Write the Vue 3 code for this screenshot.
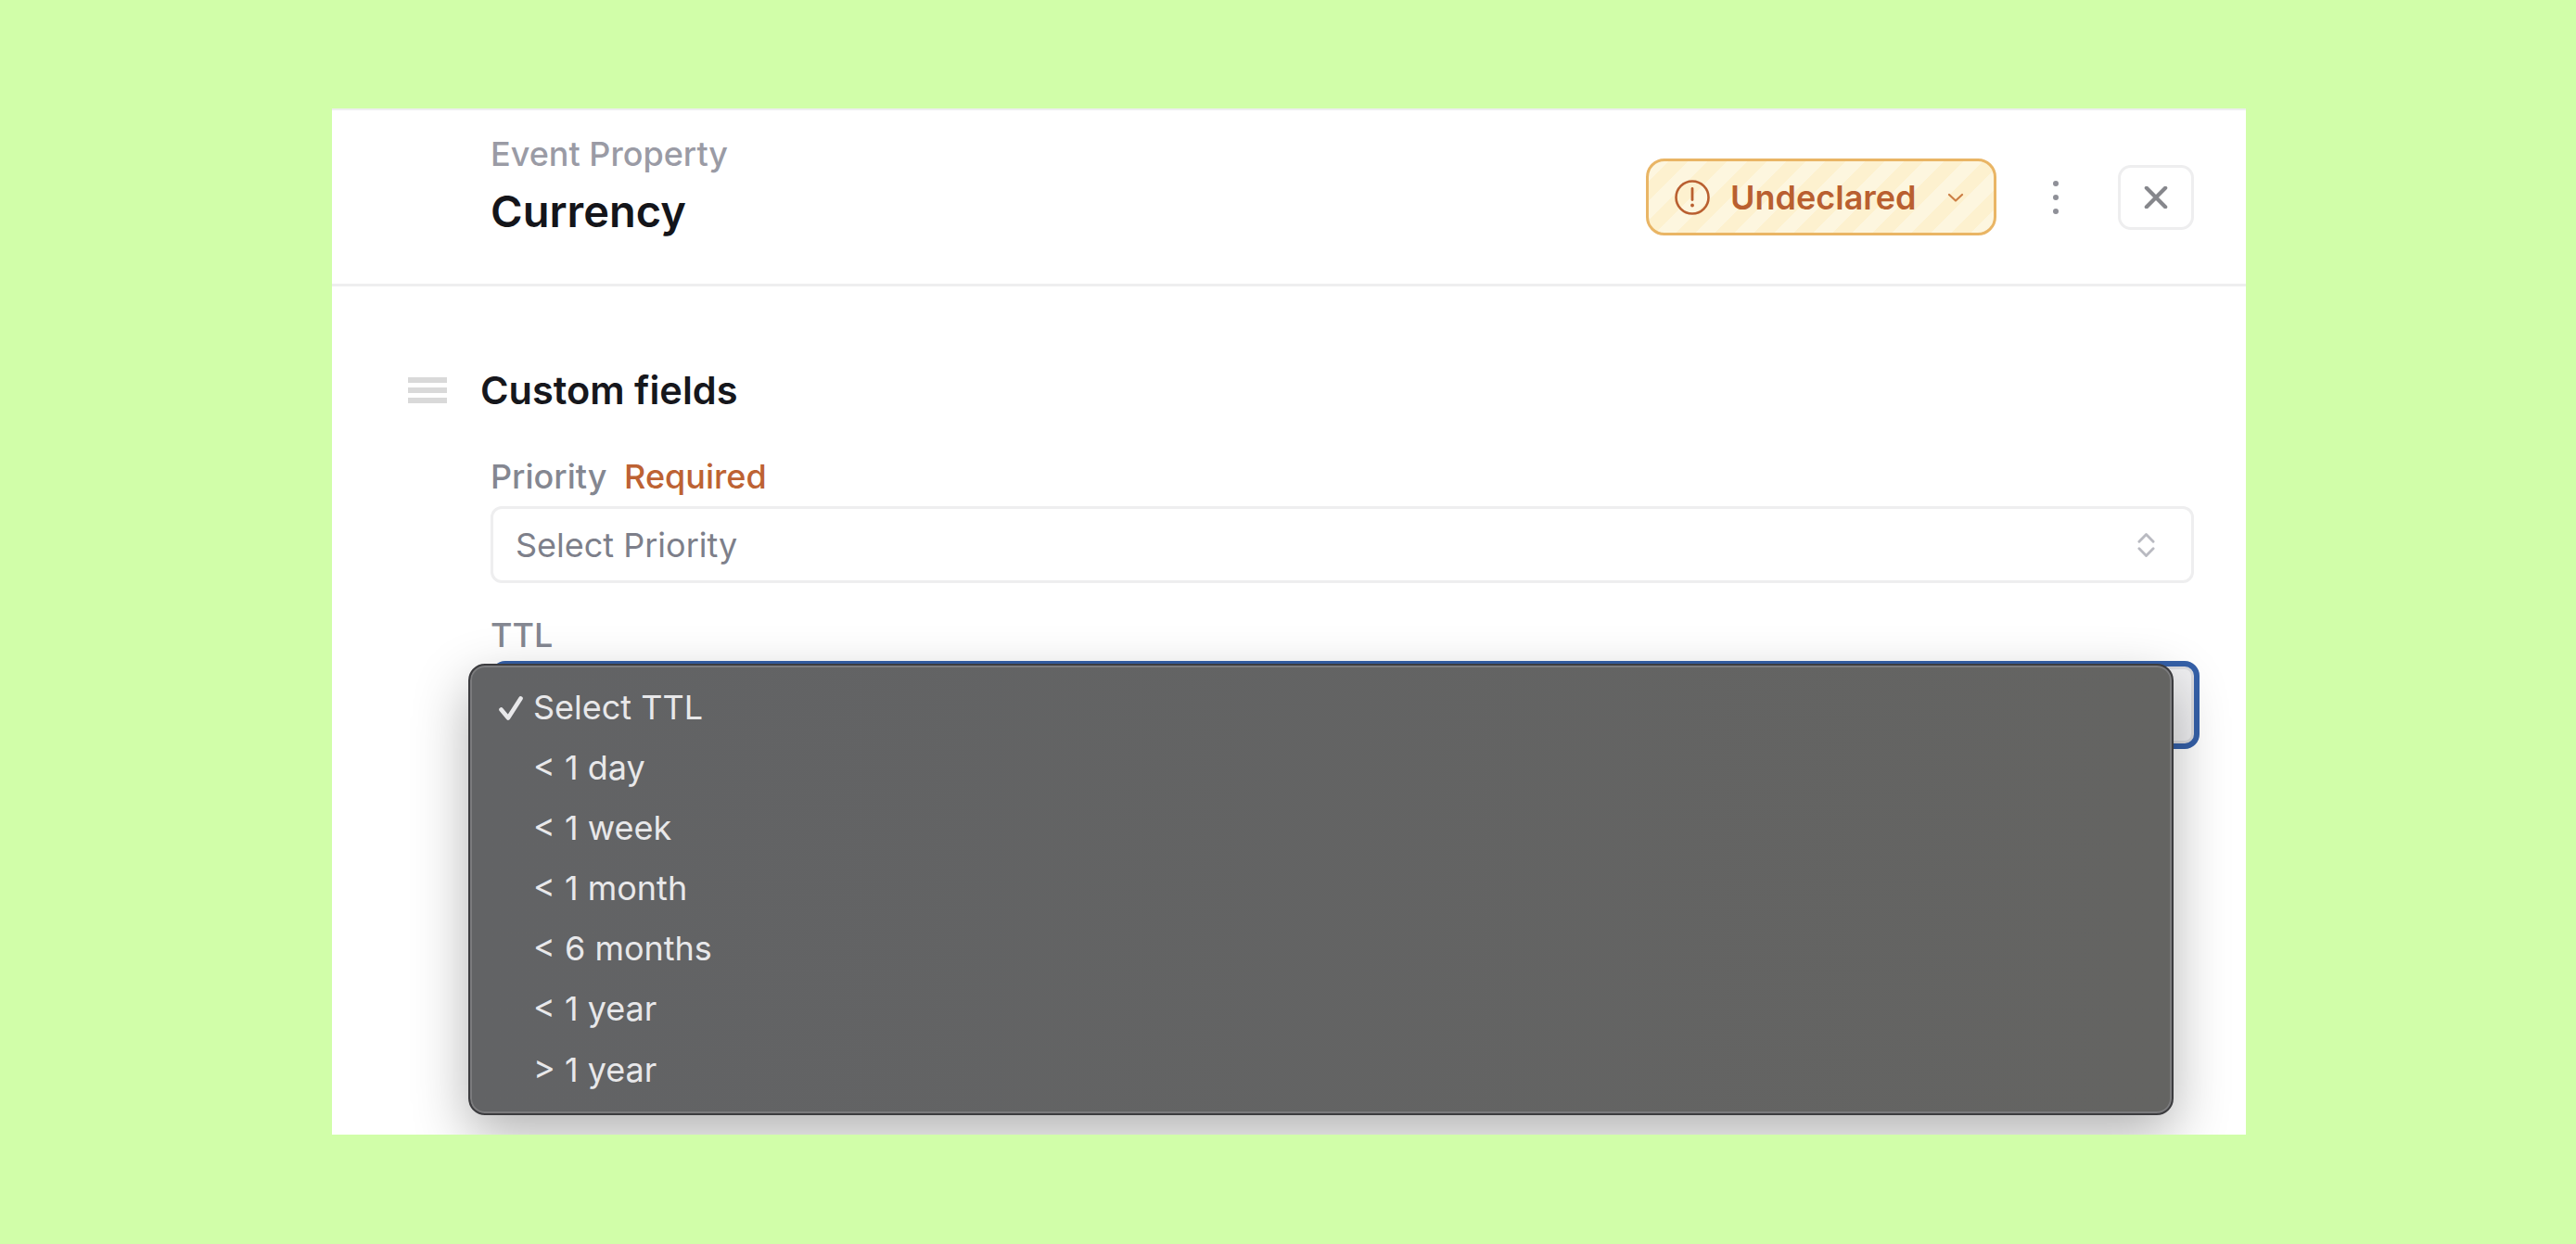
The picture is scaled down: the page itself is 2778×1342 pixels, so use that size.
<script setup>
const options = ['< 1 day', '< 1 week', '< 1 month', '< 6 months', '< 1 year', '> 1 year']
</script>

<template>
  <div class="page">
    <section class="panel">
      <header class="header">
        <div class="titles">
          <div class="eyebrow">Event Property</div>
          <h1 class="title">Currency</h1>
        </div>
        <div class="actions">
          <div class="badge">
            <svg class="badge-icon" viewBox="0 0 38 38" fill="none" stroke="currentColor">
              <circle cx="19" cy="19" r="17.5" stroke-width="2.6" />
              <path d="M19 9.5v12" stroke-width="2.8" stroke-linecap="round" />
              <circle cx="19" cy="27.5" r="1.9" fill="currentColor" stroke="none" />
            </svg>
            <span class="badge-text">Undeclared</span>
            <svg class="badge-chevron" viewBox="0 0 18 10" fill="none" stroke="currentColor">
              <path d="M2 2l7 6.5L16 2" stroke-width="2.2" stroke-linecap="round" stroke-linejoin="round" />
            </svg>
          </div>
          <div class="kebab"><i></i><i></i><i></i></div>
          <button class="close" aria-label="Close">
            <svg viewBox="0 0 26 26" fill="none" stroke="currentColor">
              <path d="M2 2l22 22M24 2L2 24" stroke-width="4.6" stroke-linecap="round" />
            </svg>
          </button>
        </div>
      </header>

      <div class="body">
        <div class="section-head">
          <div class="burger"><i></i><i></i><i></i></div>
          <h2 class="section-title">Custom fields</h2>
        </div>

        <div class="field first">
          <div class="label">Priority <span class="required">Required</span></div>
          <div class="select">
            <span>Select Priority</span>
            <svg class="updown" viewBox="0 0 20 28" fill="none" stroke="currentColor">
              <path d="M2 10l8-8 8 8M2 18l8 8 8-8" stroke-width="3" stroke-linecap="round" stroke-linejoin="round" />
            </svg>
          </div>
        </div>

        <div class="field">
          <div class="label">TTL</div>
          <div class="select focused"></div>
        </div>
      </div>

      <div class="menu">
        <div class="option selected">
          <svg class="check" viewBox="0 0 26 26" fill="none" stroke="currentColor">
            <path d="M2.5 14.5l7.5 9L23.5 2.5" stroke-width="4.6" stroke-linejoin="round" stroke-linecap="round" />
          </svg>
          Select TTL
        </div>
        <div v-for="o in options" :key="o" class="option">{{ o }}</div>
      </div>
    </section>
  </div>
</template>

<style>
html, body { margin: 0; background: #d1fea9; }
</style>

<style scoped>
.page {
  box-sizing: border-box;
  height: 1342px;
  padding: 117px 0 0 358px;
  background: #d1fea9;
  font-family: Inter, "Liberation Sans", sans-serif;
  overflow: hidden;
}
.panel {
  position: relative;
  box-sizing: border-box;
  width: 2064px;
  height: 1107px;
  background: #fff;
  border-top: 2px solid #eeeeef;
  overflow: hidden;
}
.header {
  box-sizing: border-box;
  height: 190px;
  display: flex;
  justify-content: space-between;
  padding: 0 56px 0 171px;
  border-bottom: 3px solid #eeeeef;
}
.titles { padding-top: 25px; }
.eyebrow {
  font-size: 36px;
  line-height: 44px;
  font-weight: 500;
  color: #9a9ba5;
}
.title {
  margin: 12px 0 0;
  font-size: 47px;
  line-height: 56px;
  font-weight: 600;
  color: #14151a;
}
.actions {
  display: flex;
  align-items: center;
}
.badge {
  box-sizing: border-box;
  width: 378px;
  height: 83px;
  display: flex;
  align-items: center;
  padding-left: 28px;
  border: 3px solid #e9b565;
  border-radius: 20px;
  color: #b95f30;
  background: repeating-linear-gradient(135deg, #fdf6df 0 15px, #fdf1cf 15px 30px);
}
.badge-icon { width: 38px; height: 38px; flex: none; }
.badge-text {
  margin-left: 22px;
  font-size: 36px;
  line-height: 44px;
  font-weight: 600;
}
.badge-chevron { width: 18px; height: 10px; margin-left: 33px; flex: none; color: #cc7f45; }
.kebab {
  width: 8px;
  margin-left: 61px;
  display: flex;
  flex-direction: column;
  gap: 9px;
}
.kebab i {
  display: block;
  width: 6px;
  height: 6px;
  border-radius: 50%;
  background: #8f9098;
}
.close {
  box-sizing: border-box;
  width: 82px;
  height: 70px;
  margin-left: 62px;
  padding: 0;
  display: flex;
  align-items: center;
  justify-content: center;
  background: #fff;
  border: 3px solid #eeeeef;
  border-radius: 14px;
  color: #86878c;
}
.close svg { width: 26px; height: 24px; }
.body { padding: 0 56px 0 171px; }
.section-head {
  display: flex;
  align-items: center;
  margin: 88px 0 0 -89px;
  height: 48px;
}
.burger {
  width: 42px;
  display: flex;
  flex-direction: column;
  gap: 5px;
}
.burger i { display: block; height: 6px; background: #d9d9d9; }
.section-title {
  margin: 0 0 0 36px;
  font-size: 41.5px;
  line-height: 48px;
  font-weight: 600;
  color: #16171c;
}
.field { margin-top: 34px; }
.field.first { margin-top: 47px; }
.label {
  font-size: 36px;
  line-height: 44px;
  font-weight: 500;
  color: #848791;
}
.required { margin-left: 9px; color: #bd6233; }
.select {
  box-sizing: border-box;
  height: 83px;
  margin-top: 10px;
  display: flex;
  align-items: center;
  justify-content: space-between;
  padding: 0 17px 0 24px;
  border: 3px solid #eeeeef;
  border-radius: 12px;
  font-size: 36px;
  color: #7d7f8a;
}
.updown { width: 19px; height: 28px; margin-right: 22px; color: #b9bac1; flex: none; }
.focused {
  height: 95px;
  margin: 6px -6px 0 0;
  background: #f0f0f2;
  border: 6px solid #3560a8;
  border-radius: 16px;
  box-shadow: inset 0 0 0 3px #dcdce0;
}
.menu {
  position: absolute;
  left: 147px;
  top: 597px;
  box-sizing: border-box;
  width: 1839px;
  height: 487px;
  padding: 13px 0 0 68px;
  border: 2px solid #3c3c3f;
  border-radius: 18px;
  background: linear-gradient(90deg, #626365, #646462);
  box-shadow: inset 0 0 0 2px #7b7b7d, 0 22px 60px rgba(0, 0, 0, 0.3);
  color: #e8e8ea;
}
.option {
  position: relative;
  height: 65.1px;
  font-size: 36px;
  line-height: 65.1px;
}
.check {
  position: absolute;
  left: -37px;
  top: 20px;
  width: 26px;
  height: 26px;
}
</style>
